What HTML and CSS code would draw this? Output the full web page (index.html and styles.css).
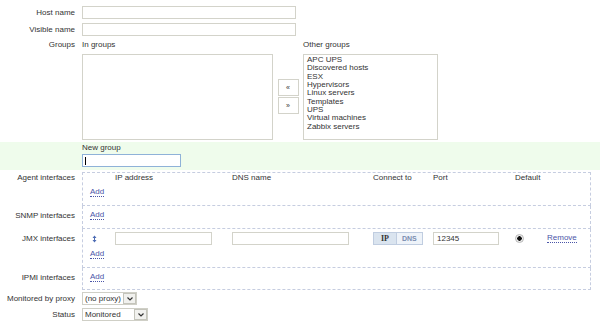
FILE: index.html
```html
<!DOCTYPE html>
<html lang="en">
<head>
  <meta charset="UTF-8" />
  <title>Host</title>
  <link rel="stylesheet" href="styles.css">
</head>
<body>
  <div class="form">
    <div class="row field-row">
      <div class="label">Host name</div>
      <input class="text" type="text" style="width: 214px;">
    </div>
    <div class="row field-row">
      <div class="label">Visible name</div>
      <input class="text" type="text" style="width: 214px;">
    </div>

    <div class="row groups-row">
      <div class="label">Groups</div>
      <div class="groups">
        <div class="caption">In groups</div>
        <div></div>
        <div class="caption">Other groups</div>
        <div class="listbox in-groups"></div>
        <div class="move-buttons">
          <button class="move">&laquo;</button>
          <button class="move">&raquo;</button>
        </div>
        <div class="listbox other-groups">
          <div>APC UPS</div>
          <div>Discovered hosts</div>
          <div>ESX</div>
          <div>Hypervisors</div>
          <div>Linux servers</div>
          <div>Templates</div>
          <div>UPS</div>
          <div>Virtual machines</div>
          <div>Zabbix servers</div>
        </div>
      </div>
    </div>

    <div class="row new-group">
      <div class="label"></div>
      <div>
        <div class="caption">New group</div>
        <div class="text focused" style="width: 99px;"><span class="caret"></span></div>
      </div>
    </div>

    <!-- Interfaces -->
    <div class="row iface-row agent">
      <div class="label">Agent interfaces</div>
      <div class="cell first">
        <div class="iface-grid head">
          <div></div>
          <div>IP address</div>
          <div>DNS name</div>
          <div>Connect to</div>
          <div>Port</div>
          <div>Default</div>
          <div></div>
        </div>
        <a class="link add" href="#">Add</a>
      </div>
    </div>

    <div class="row iface-row snmp">
      <div class="label">SNMP interfaces</div>
      <div class="cell">
        <a class="link add" href="#">Add</a>
      </div>
    </div>

    <div class="row iface-row jmx">
      <div class="label">JMX interfaces</div>
      <div class="cell">
        <div class="iface-grid">
          <div class="drag">
            <svg width="5" height="8" viewBox="0 0 5 8">
              <path d="M2.5 0.5 L4.5 3 L0.5 3 Z M2.5 7.5 L4.5 5 L0.5 5 Z" fill="#4d6cb4"/>
              <path d="M2.5 2 V6" stroke="#4d6cb4" stroke-width="1"/>
            </svg>
          </div>
          <div><input class="text" type="text" style="width: 97px;"></div>
          <div><input class="text" type="text" style="width: 117px;"></div>
          <div class="toggle">
            <span class="seg active">IP</span><span class="seg">DNS</span>
          </div>
          <div><input class="text" type="text" value="12345" style="width: 66px;"></div>
          <div><span class="radio"></span></div>
          <div><a class="link" href="#">Remove</a></div>
        </div>
        <a class="link add" href="#">Add</a>
      </div>
    </div>

    <div class="row iface-row ipmi">
      <div class="label">IPMI interfaces</div>
      <div class="cell">
        <a class="link add" href="#">Add</a>
      </div>
    </div>

    <div class="row select-row">
      <div class="label">Monitored by proxy</div>
      <div class="select" style="width: 55px;">
        <span class="value">(no proxy)</span>
        <span class="arrow"><svg width="6" height="4" viewBox="0 0 6 4"><path d="M0.5 0.5 L3 3 L5.5 0.5" fill="none" stroke="#333" stroke-width="1.2"/></svg></span>
      </div>
    </div>
    <div class="row select-row">
      <div class="label">Status</div>
      <div class="select" style="width: 66px;">
        <span class="value">Monitored</span>
        <span class="arrow"><svg width="6" height="4" viewBox="0 0 6 4"><path d="M0.5 0.5 L3 3 L5.5 0.5" fill="none" stroke="#333" stroke-width="1.2"/></svg></span>
      </div>
    </div>
  </div>
</body>
</html>
```

FILE: styles.css
```css
* {
  box-sizing: border-box;
  margin: 0;
  padding: 0;
}

body {
  background: #fff;
  font-family: 'Liberation Sans', Arial, sans-serif;
  font-size: 8px;
  color: #333;
  overflow: hidden;
}

.form {
  padding-top: 4px;
}

.row {
  display: flex;
}

.label {
  width: 82px;
  flex: none;
  padding-right: 7px;
  text-align: right;
  line-height: 9px;
}

.field-row {
  padding: 2px 0;
}

.field-row .label {
  line-height: 13px;
}

.text {
  display: block;
  height: 13px;
  border: 1px solid #d3d3ca;
  background: #fff;
  font-family: inherit;
  font-size: 8px;
  color: #333;
  padding: 0 3px;
  outline: none;
}

.text.focused {
  border-color: #8fb2d8;
  position: relative;
}

.caret {
  position: absolute;
  left: 2px;
  top: 2px;
  width: 1px;
  height: 8px;
  background: #000;
}

/* Groups */
.groups-row {
  padding-top: 2px;
  padding-bottom: 2px;
}

.groups-row .label {
  line-height: 10px;
}

.groups {
  display: grid;
  grid-template-columns: 191px 30px 135px;
  grid-template-rows: 10px 86px;
  row-gap: 4px;
}

.caption {
  line-height: 10px;
}

.listbox {
  border: 1px solid #d3d3ca;
  background: #fff;
}

.other-groups {
  padding: 1px 3px;
  line-height: 8.33px;
  color: #333;
}

.move-buttons {
  align-self: center;
  justify-self: center;
  display: flex;
  flex-direction: column;
  gap: 1px;
  padding-bottom: 2px;
}

.move {
  width: 21px;
  height: 17px;
  border: 1px solid #d3d3ca;
  background: #fff;
  font-family: inherit;
  font-size: 7px;
  color: #333;
}

/* New group */
.new-group {
  background: #effcec;
  padding: 2px 0 3px;
}

.new-group .caption {
  line-height: 8px;
  margin-bottom: 2px;
}

/* Interfaces */
.agent {
  margin-top: 2px;
}

.cell {
  width: 509px;
  border: 1px dashed #c6cde0;
  border-top: none;
  padding: 0 7px;
  line-height: 9px;
}

.cell.first {
  border-top: 1px dashed #c6cde0;
}

.agent .label { padding-top: 1px; }
.agent .cell { padding-bottom: 8px; }
.agent .add { margin-top: 6px; }

.snmp .label { padding-top: 5px; }
.snmp .cell { padding-top: 5px; padding-bottom: 8px; }

.jmx .label { padding-top: 5px; }
.jmx .cell { padding-top: 3px; padding-bottom: 8px; }
.jmx .add { margin-top: 5px; }

.ipmi .label { padding-top: 5px; }
.ipmi .cell { padding-top: 5px; padding-bottom: 7px; }

.iface-grid {
  display: grid;
  grid-template-columns: 25px 117px 141px 60px 82px 32px auto;
  align-items: center;
}

.iface-grid > div {
  display: flex;
  align-items: center;
}

.drag {
  padding-left: 2px;
}

.drag svg {
  display: block;
}

.link {
  display: inline-block;
  color: #4a55a8;
  text-decoration: none;
  border-bottom: 1px dotted #4a55a8;
  line-height: 8px;
}

.add {
  display: table;
}

.toggle {
  height: 13px;
}

.seg {
  display: inline-block;
  height: 13px;
  line-height: 11px;
  border: 1px solid #c0cde0;
  background: #eef3f9;
  color: #7a8db0;
  font-weight: bold;
  font-size: 7px;
  padding: 0 5px;
}

.seg.active {
  background: #dae4ef;
  color: #333;
  font-family: 'Liberation Serif', 'Times New Roman', serif;
  font-size: 8px;
  width: 23px;
  text-align: center;
  padding: 0;
  border-right: none;
}

.radio {
  display: inline-block;
  width: 9px;
  height: 9px;
  border-radius: 50%;
  border: 1px solid #b8b8b8;
  background: radial-gradient(circle, #111 0 2px, #eee 2.5px);
}

/* Selects */
.select-row {
  padding: 2px 0 1px;
}

.select-row .label {
  line-height: 13px;
}

.select {
  display: flex;
  align-items: center;
  height: 13px;
  border: 1px solid #cfcfc6;
  background: #fff;
  padding-left: 2px;
}

.select .value {
  flex: 1;
  line-height: 11px;
  white-space: nowrap;
}

.select .arrow {
  width: 13px;
  height: 11px;
  border: 1px solid #c4c4bb;
  background: #f1f1ee;
  display: flex;
  align-items: center;
  justify-content: center;
}

.select .arrow svg {
  display: block;
}
```
